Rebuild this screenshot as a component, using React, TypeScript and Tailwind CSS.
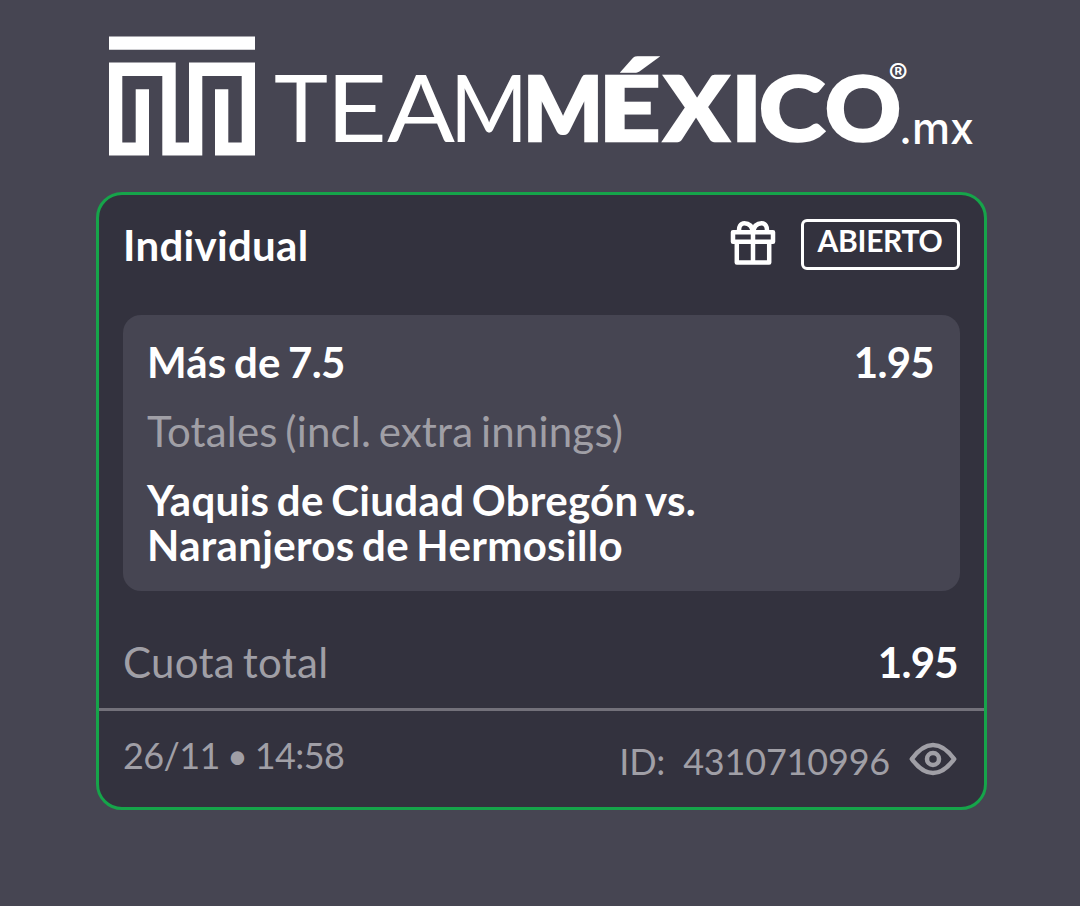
interface Glyph {
  char: string
  x: number
  width: number
}

const team: Glyph[] = [
  { char: 'T', x: 274, width: 54 },
  { char: 'E', x: 326, width: 61 },
  { char: 'A', x: 387, width: 68 },
  { char: 'M', x: 450, width: 78 },
]

const mexico: Glyph[] = [
  { char: 'M', x: 523, width: 80 },
  { char: 'É', x: 598.5, width: 62 },
  { char: 'X', x: 664, width: 65 },
  { char: 'I', x: 731, width: 31 },
  { char: 'C', x: 759, width: 66 },
  { char: 'O', x: 825, width: 76 },
]

function Logo() {
  return (
    <svg viewBox="96 0 891 160" className="h-40 w-[891px] overflow-visible fill-white" role="img">
      <path d="M109 36.5h146v13.3H109z" />
      <path d="M109 62.6h66.700v79.800H189V62.600h66v93h-40V89.300h13.300v53.100h13.400V76h-39.400v79.600h-40V76h-40v66.400h13.400V89.300H149v66.300h-40z" />
      {team.map((glyph) => (
        <text
          key={glyph.x}
          x={glyph.x}
          y={142.3}
          textLength={glyph.width}
          lengthAdjust="spacingAndGlyphs"
          className="font-['Lato',sans-serif] text-[92.5px] font-normal"
        >
          {glyph.char}
        </text>
      ))}
      {mexico.map((glyph) => (
        <text
          key={glyph.x}
          x={glyph.x}
          y={141}
          textLength={glyph.width}
          lengthAdjust="spacingAndGlyphs"
          className="stroke-white font-['Lato',sans-serif] text-[89.5px] font-black"
          strokeWidth="2.6"
        >
          {glyph.char}
        </text>
      ))}
      <text x="888.5" y="84" className="font-['Inter',sans-serif] text-[29px] font-medium">®</text>
      <text
        x="899"
        y="143.5"
        textLength="75"
        lengthAdjust="spacingAndGlyphs"
        className="font-['Inter',sans-serif] text-[44px] font-medium"
      >
        .mx
      </text>
    </svg>
  )
}

function GiftIcon() {
  return (
    <svg viewBox="0 0 46 46" className="h-[46px] w-[46px] fill-none stroke-white" strokeWidth="4.5" strokeLinejoin="round">
      <path d="M3 13.200h40v9.500H3zM6.800 22.700h32.400V43.500H6.800zM23 13v30.500" />
      <path d="M23 13C22 7 18.500 4.200 14.500 4.200S8.500 8 9.200 12.500M23 13C24 7 27.500 4.200 31.500 4.200S37.500 8 36.800 12.500" />
    </svg>
  )
}

function EyeIcon() {
  return (
    <svg viewBox="0 0 48 34" className="h-[34px] w-[48px] fill-none stroke-[#a09fa6]" strokeWidth="4.500" strokeLinejoin="round">
      <path d="M2.800 17C9 8.500 16 3 24 3s15 5.500 21.200 14C39 25.500 32 31 24 31S9 25.500 2.800 17z" />
      <circle cx="24" cy="17" r="6" />
    </svg>
  )
}

export default function App() {
  return (
    <main className="h-[906px] w-[1080px] overflow-hidden bg-[#464552] pl-[96px] font-['Lato',sans-serif] text-[42px] leading-[45px] text-white">
      <Logo />

      <section className="mt-8 flex h-[618px] w-[891px] flex-col rounded-[26px] border-[3px] border-[#16a44a] bg-[#33323e]">
        <header className="mt-6 flex h-[51px] items-start justify-between px-6">
          <h1 className="mt-1 font-bold tracking-[0.3px]">Individual</h1>
          <div className="flex items-start">
            <GiftIcon />
            <span className="ml-[25px] h-[51px] w-[159px] rounded-md border-[3px] border-white pr-px text-center text-[30px] leading-[37px] font-bold tracking-[-0.3px]">
              ABIERTO
            </span>
          </div>
        </header>

        <div className="mx-6 mt-[45px] h-[276px] rounded-[18px] bg-[#464552] px-6 pt-[25px]">
          <div className="flex justify-between font-bold tracking-[-0.7px]">
            <span className="tracking-[0.2px] [word-spacing:-3px]">
              Más de <span className="tracking-[-0.7px]">7.5</span>
            </span>
            <span className="mr-[2px]">1.95</span>
          </div>
          <p className="mt-6 tracking-[0.2px] text-[#a09fa6] [word-spacing:-3.4px]">Totales (incl. extra innings)</p>
          <p className="mt-6 w-[600px] font-bold tracking-[0.33px] [word-spacing:-3.1px]">
            Yaquis de Ciudad Obregón vs. Naranjeros de Hermosillo
          </p>
        </div>

        <div className="mt-[49px] flex justify-between px-6">
          <span className="tracking-[0.3px] text-[#a09fa6] [word-spacing:-3.4px]">Cuota total</span>
          <span className="mr-[2px] font-bold tracking-[-0.7px]">1.95</span>
        </div>

        <footer className="mt-[23px] flex grow items-start justify-between border-t-[3px] border-[#73717a] px-6 text-4xl leading-[45px] text-[#a09fa6]">
          <span className="mt-[22px] tracking-[-0.6px] [word-spacing:-1.3px]">26/11 • 14:58</span>
          <div className="mt-7 mr-[3px] flex items-start">
            <span className="tracking-[-0.2px] whitespace-pre">ID:  4310710996</span>
            <span className="mt-[3px] ml-[19px]"><EyeIcon /></span>
          </div>
        </footer>
      </section>
    </main>
  )
}
